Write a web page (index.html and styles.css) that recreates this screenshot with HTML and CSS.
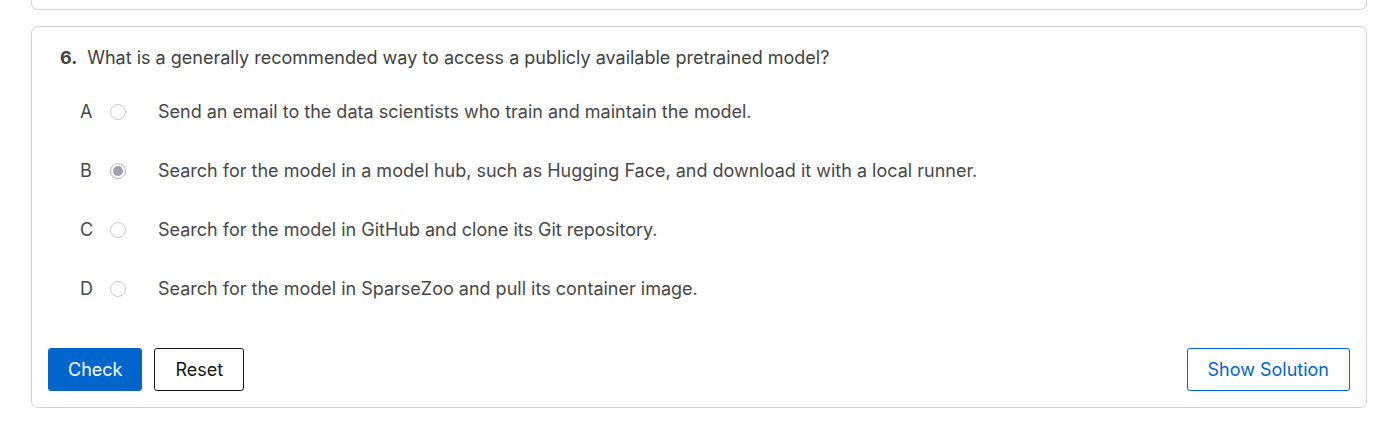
FILE: index.html
```html
<!DOCTYPE html>
<html lang="en">
<head>
<meta charset="utf-8">
<title>Quiz question</title>
<link rel="stylesheet" href="styles.css">
</head>
<body>
<div class="page">
  <div class="prev-card"></div>
  <div class="card">
    <p class="question"><strong class="qnum">6.</strong> What is a generally recommended way to access a publicly available pretrained model?</p>
    <ul class="options">
      <li class="option"><span class="letter">A</span><span class="radio"></span><span class="otext">Send an email to the data scientists who train and maintain the model.</span></li>
      <li class="option"><span class="letter">B</span><span class="radio checked"></span><span class="otext">Search for the model in a model hub, such as Hugging Face, and download it with a local runner.</span></li>
      <li class="option"><span class="letter">C</span><span class="radio"></span><span class="otext">Search for the model in GitHub and clone its Git repository.</span></li>
      <li class="option"><span class="letter">D</span><span class="radio"></span><span class="otext">Search for the model in SparseZoo and pull its container image.</span></li>
    </ul>
    <div class="actions">
      <div class="left-actions">
        <button class="btn btn-primary">Check</button>
        <button class="btn btn-plain">Reset</button>
      </div>
      <button class="btn btn-outline">Show Solution</button>
    </div>
  </div>
</div>
</body>
</html>
```
FILE: styles.css
```css
* { box-sizing: border-box; }
html, body { margin: 0; padding: 0; background: #fff; }
body {
  font-family: Inter, "Open Sans", "Liberation Sans", sans-serif;
  color: #474747;
  font-size: 18px;
}
.page {
  padding: 0 26px 0 31px;
}
.prev-card {
  height: 10px;
  border: 1px solid #d2d2d2;
  border-top: none;
  border-radius: 0 0 7px 7px;
  margin-bottom: 16px;
}
.card {
  border: 1px solid #d2d2d2;
  border-radius: 7px;
  padding: 17px 16px 16px;
}
.question {
  margin: 0 0 0 12px;
  line-height: 27px;
  color: #414141;
}
.qnum { font-weight: 700; margin-right: 5px; }
.options {
  list-style: none;
  margin: 11px 0 0;
  padding: 0;
}
.option {
  display: flex;
  align-items: center;
  height: 59px;
  padding-left: 32px;
  line-height: 27px;
}
.letter {
  width: 13px;
  text-align: left;
}
.radio {
  width: 16px;
  height: 16px;
  margin-left: 17px;
  border: 1px solid #c8c8c8;
  border-radius: 50%;
  background: #fff;
  display: flex;
  align-items: center;
  justify-content: center;
}
.radio.checked {
  border-color: #b4b4bc;
}
.radio.checked::after {
  content: "";
  width: 10px;
  height: 10px;
  border-radius: 50%;
  background: #a0a0ad;
}
.otext {
  margin-left: 32px;
}
.actions {
  display: flex;
  justify-content: space-between;
  margin-top: 30px;
}
.left-actions {
  display: flex;
  gap: 12px;
}
.btn {
  font-family: inherit;
  font-size: 18px;
  height: 43px;
  padding: 0 20px;
  border-radius: 3px;
  cursor: pointer;
  line-height: 1;
}
.btn-primary {
  padding: 0 19px;
  background: #0066cc;
  color: #fff;
  border: 1px solid #0066cc;
}
.btn-plain {
  background: #fff;
  color: #151515;
  border: 1px solid #151515;
}
.btn-outline {
  background: #fff;
  color: #0066cc;
  border: 1px solid #0066cc;
}
```
